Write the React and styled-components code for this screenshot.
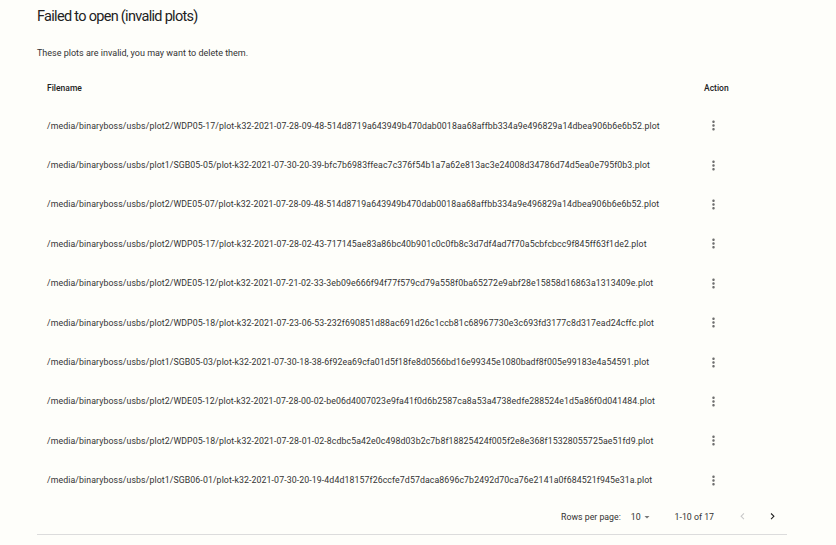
import React from "react";
import styled, { createGlobalStyle } from "styled-components";

const Global = createGlobalStyle`
  html, body { margin: 0; padding: 0; background: #fefefa; }
  body { font-family: Roboto, "Liberation Sans", sans-serif; color: rgba(0,0,0,0.87); }
`;

const Page = styled.div`
  width: 750px;
  padding: 7px 0 0 37px;
`;

const Title = styled.h1`
  margin: 0;
  font-size: 14.5px;
  letter-spacing: -0.7px;
  line-height: 20px;
  font-weight: 400;
  color: #222;
`;

const Description = styled.p`
  margin: 20px 0 0;
  font-size: 9px;
  line-height: 12px;
  color: #333;
`;

const Table = styled.table`
  margin-top: 11px;
  width: 750px;
  border-collapse: collapse;
  table-layout: fixed;
`;

const HeadCell = styled.th`
  height: 36px;
  padding: 0 10px;
  text-align: left;
  font-size: 8.5px;
  font-weight: 500;
  color: #222;
  width: ${(p) => (p.$narrow ? "73px" : "auto")};
  vertical-align: middle;
`;

const Row = styled.tr`
  height: 39.4px;
`;

const Cell = styled.td`
  padding: 0 10px;
  font-size: 8.75px;
  letter-spacing: 0.1px;
  color: #333;
  white-space: nowrap;
  vertical-align: middle;
`;

const IconButton = styled.button`
  display: flex;
  align-items: center;
  justify-content: center;
  width: ${(p) => p.$size || 18}px;
  height: ${(p) => p.$size || 18}px;
  padding: 0;
  border: none;
  background: none;
  color: ${(p) => (p.$disabled ? "#c8c8c8" : p.$dark ? "#222" : "#6f6f6f")};
  cursor: pointer;
`;

const Footer = styled.div`
  display: flex;
  align-items: center;
  justify-content: flex-end;
  height: 34px;
  border-bottom: 1px solid #dcdcdc;
  font-size: 8.75px;
  color: #333;
`;

const SelectBox = styled.div`
  display: flex;
  align-items: center;
  margin-left: 10px;
  margin-right: 22px;
  color: #333;
`;

const Range = styled.span`
  margin-right: 14px;
`;

const Actions = styled.div`
  display: flex;
  align-items: center;
`;

const MoreVert = () => (
  <svg width="15" height="15" viewBox="0 0 24 24" fill="currentColor">
    <path d="M12 8c1.1 0 2-.9 2-2s-.9-2-2-2-2 .9-2 2 .9 2 2 2zm0 2c-1.1 0-2 .9-2 2s.9 2 2 2 2-.9 2-2-.9-2-2-2zm0 6c-1.1 0-2 .9-2 2s.9 2 2 2 2-.9 2-2-.9-2-2-2z" />
  </svg>
);

const ArrowLeft = () => (
  <svg width="13" height="13" viewBox="0 0 24 24" fill="currentColor">
    <path d="M15.41 16.09l-4.58-4.59 4.58-4.59L14 5.5l-6 6 6 6z" />
  </svg>
);

const ArrowRight = () => (
  <svg width="13" height="13" viewBox="0 0 24 24" fill="currentColor">
    <path d="M8.59 16.34l4.58-4.59-4.58-4.59L10 5.75l6 6-6 6z" />
  </svg>
);

const DropDown = () => (
  <svg width="12" height="12" viewBox="0 0 24 24" fill="#777">
    <path d="M7 10l5 5 5-5z" />
  </svg>
);

const files = [
  "/media/binaryboss/usbs/plot2/WDP05-17/plot-k32-2021-07-28-09-48-514d8719a643949b470dab0018aa68affbb334a9e496829a14dbea906b6e6b52.plot",
  "/media/binaryboss/usbs/plot1/SGB05-05/plot-k32-2021-07-30-20-39-bfc7b6983ffeac7c376f54b1a7a62e813ac3e24008d34786d74d5ea0e795f0b3.plot",
  "/media/binaryboss/usbs/plot2/WDE05-07/plot-k32-2021-07-28-09-48-514d8719a643949b470dab0018aa68affbb334a9e496829a14dbea906b6e6b52.plot",
  "/media/binaryboss/usbs/plot2/WDP05-17/plot-k32-2021-07-28-02-43-717145ae83a86bc40b901c0c0fb8c3d7df4ad7f70a5cbfcbcc9f845ff63f1de2.plot",
  "/media/binaryboss/usbs/plot2/WDE05-12/plot-k32-2021-07-21-02-33-3eb09e666f94f77f579cd79a558f0ba65272e9abf28e15858d16863a1313409e.plot",
  "/media/binaryboss/usbs/plot2/WDP05-18/plot-k32-2021-07-23-06-53-232f690851d88ac691d26c1ccb81c68967730e3c693fd3177c8d317ead24cffc.plot",
  "/media/binaryboss/usbs/plot1/SGB05-03/plot-k32-2021-07-30-18-38-6f92ea69cfa01d5f18fe8d0566bd16e99345e1080badf8f005e99183e4a54591.plot",
  "/media/binaryboss/usbs/plot2/WDE05-12/plot-k32-2021-07-28-00-02-be06d4007023e9fa41f0d6b2587ca8a53a4738edfe288524e1d5a86f0d041484.plot",
  "/media/binaryboss/usbs/plot2/WDP05-18/plot-k32-2021-07-28-01-02-8cdbc5a42e0c498d03b2c7b8f18825424f005f2e8e368f15328055725ae51fd9.plot",
  "/media/binaryboss/usbs/plot1/SGB06-01/plot-k32-2021-07-30-20-19-4d4d18157f26ccfe7d57daca8696c7b2492d70ca76e2141a0f684521f945e31a.plot",
];

export default function App() {
  return (
    <>
      <Global />
      <Page>
        <Title>Failed to open (invalid plots)</Title>
        <Description>These plots are invalid, you may want to delete them.</Description>
        <Table>
          <thead>
            <tr>
              <HeadCell>Filename</HeadCell>
              <HeadCell $narrow>Action</HeadCell>
            </tr>
          </thead>
          <tbody>
            {files.map((f, i) => (
              <Row key={i}>
                <Cell>{f}</Cell>
                <Cell>
                  <IconButton aria-label="more">
                    <MoreVert />
                  </IconButton>
                </Cell>
              </Row>
            ))}
          </tbody>
        </Table>
        <Footer>
          <span>Rows per page:</span>
          <SelectBox>
            <span>10</span>
            <DropDown />
          </SelectBox>
          <Range>1-10 of 17</Range>
          <Actions>
            <IconButton $size={29.5} $disabled aria-label="previous">
              <ArrowLeft />
            </IconButton>
            <IconButton $size={29.5} $dark aria-label="next">
              <ArrowRight />
            </IconButton>
          </Actions>
        </Footer>
      </Page>
    </>
  );
}
